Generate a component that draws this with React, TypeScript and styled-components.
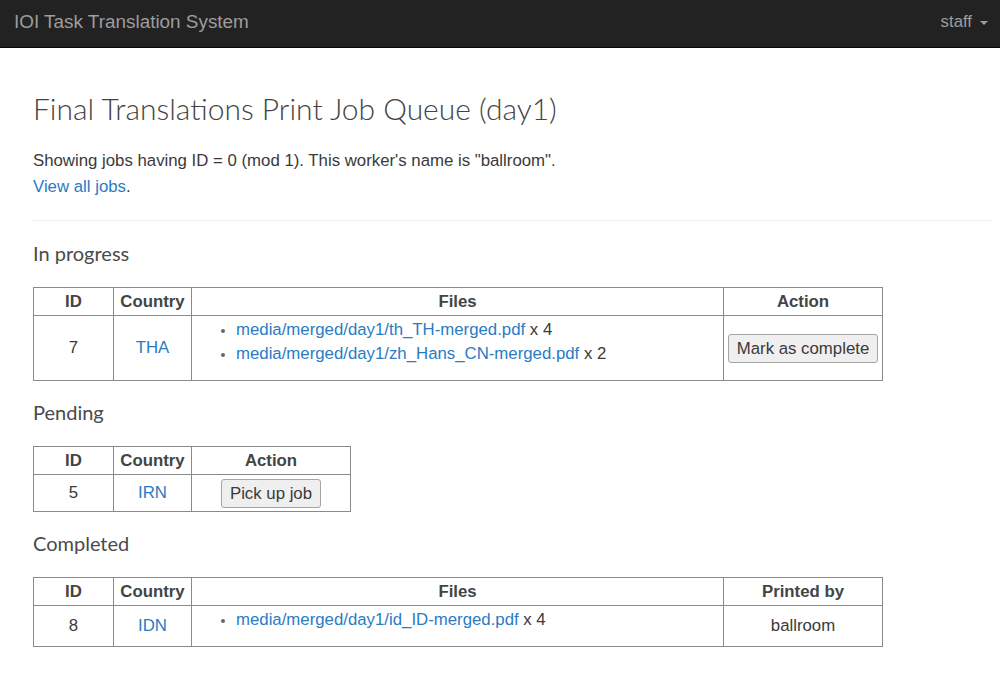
import React from "react";
import styled, { createGlobalStyle } from "styled-components";

const Global = createGlobalStyle`
  html, body { margin: 0; padding: 0; background: #fff; }
  body { font-family: "Liberation Sans", Arial, sans-serif; font-size: 16.8px; color: #3a3a3a; }
  * { box-sizing: border-box; }
`;

const Navbar = styled.nav`
  height: 48px;
  background: #222;
  border-bottom: 1px solid #080808;
  display: flex;
  align-items: center;
  justify-content: space-between;
  padding: 0 12px 0 14px;
`;

const Brand = styled.a`
  color: #9d9d9d;
  font-size: 18.9px;
  text-decoration: none;
  margin-top: -3px;
`;

const UserMenu = styled.a`
  color: #9d9d9d;
  font-size: 16.8px;
  display: flex;
  align-items: center;
  gap: 8px;
  margin-top: -3px;
`;

const Caret = styled.span`
  width: 0;
  height: 0;
  border-left: 4px solid transparent;
  border-right: 4px solid transparent;
  border-top: 4px solid #9d9d9d;
  margin-top: 2px;
`;

const Container = styled.main`
  padding: 0 7px 20px 33px;
`;

const Title = styled.h1`
  font-family: "Lato", "Open Sans", sans-serif;
  font-weight: 300;
  font-size: 30px;
  line-height: 1.1;
  color: #444;
  margin: 44px 0 23px;
`;

const Para = styled.p`
  margin: 0;
  line-height: 26px;
`;

const Link = styled.a`
  color: #2a7bc4;
  text-decoration: none;
`;

const Rule = styled.hr`
  border: 0;
  border-top: 1px solid #eee;
  margin: 20px 0 21px;
`;

const SectionTitle = styled.h3`
  font-family: "Lato", "Open Sans", sans-serif;
  font-weight: 400;
  font-size: 20px;
  line-height: 1.1;
  color: #4a4a4a;
  margin: 0 0 23px;
`;

const Table = styled.table<{ $width: number }>`
  border-collapse: collapse;
  width: ${(p) => p.$width}px;
  margin-bottom: 20px;
  table-layout: fixed;
`;

const Th = styled.th<{ $w?: number }>`
  border: 1px solid #8a8a8a;
  font-weight: bold;
  text-align: center;
  height: 28px;
  padding: 0 4px;
  line-height: 20px;
  color: #444;
  ${(p) => (p.$w ? `width: ${p.$w}px;` : "")}
`;

const Td = styled.td`
  border: 1px solid #8a8a8a;
  text-align: center;
  vertical-align: middle;
  padding: 3.5px 2px;
  white-space: nowrap;
`;

const FilesTd = styled.td`
  border: 1px solid #8a8a8a;
  text-align: left;
  vertical-align: top;
  padding: 2px 4px 14px;
`;

const FileList = styled.ul`
  margin: 0;
  padding-left: 40px;
  line-height: 24px;
  li::marker { color: #666; font-size: 13px; }
`;

const Button = styled.button`
  font-family: "Liberation Sans", Arial, sans-serif;
  font-size: 16.8px;
  color: #3a3a3a;
  background: #efefef;
  border: 1px solid #a5a5a5;
  border-radius: 3px;
  padding: 3px 8px;
  line-height: 21px;
  white-space: nowrap;
`;

type File = { path: string; count: number };

const Files = ({ files }: { files: File[] }) => (
  <FileList>
    {files.map((f) => (
      <li key={f.path}>
        <Link href="#">{f.path}</Link> x {f.count}
      </li>
    ))}
  </FileList>
);

export default function App() {
  return (
    <>
      <Global />
      <Navbar>
        <Brand href="#">IOI Task Translation System</Brand>
        <UserMenu>
          staff <Caret />
        </UserMenu>
      </Navbar>
      <Container>
        <Title>Final Translations Print Job Queue (day1)</Title>
        <Para>Showing jobs having ID = 0 (mod 1). This worker's name is "ballroom".</Para>
        <Para>
          <Link href="#">View all jobs</Link>.
        </Para>
        <Rule />

        <SectionTitle>In progress</SectionTitle>
        <Table $width={850}>
          <thead>
            <tr>
              <Th $w={80}>ID</Th>
              <Th $w={78}>Country</Th>
              <Th>Files</Th>
              <Th $w={159}>Action</Th>
            </tr>
          </thead>
          <tbody>
            <tr>
              <Td>7</Td>
              <Td>
                <Link href="#">THA</Link>
              </Td>
              <FilesTd>
                <Files
                  files={[
                    { path: "media/merged/day1/th_TH-merged.pdf", count: 4 },
                    { path: "media/merged/day1/zh_Hans_CN-merged.pdf", count: 2 },
                  ]}
                />
              </FilesTd>
              <Td>
                <Button>Mark as complete</Button>
              </Td>
            </tr>
          </tbody>
        </Table>

        <SectionTitle>Pending</SectionTitle>
        <Table $width={318}>
          <thead>
            <tr>
              <Th $w={80}>ID</Th>
              <Th $w={78}>Country</Th>
              <Th>Action</Th>
            </tr>
          </thead>
          <tbody>
            <tr>
              <Td>5</Td>
              <Td>
                <Link href="#">IRN</Link>
              </Td>
              <Td>
                <Button>Pick up job</Button>
              </Td>
            </tr>
          </tbody>
        </Table>

        <SectionTitle>Completed</SectionTitle>
        <Table $width={850}>
          <thead>
            <tr>
              <Th $w={80}>ID</Th>
              <Th $w={78}>Country</Th>
              <Th>Files</Th>
              <Th $w={159}>Printed by</Th>
            </tr>
          </thead>
          <tbody>
            <tr>
              <Td>8</Td>
              <Td>
                <Link href="#">IDN</Link>
              </Td>
              <FilesTd>
                <Files files={[{ path: "media/merged/day1/id_ID-merged.pdf", count: 4 }]} />
              </FilesTd>
              <Td>ballroom</Td>
            </tr>
          </tbody>
        </Table>
      </Container>
    </>
  );
}
